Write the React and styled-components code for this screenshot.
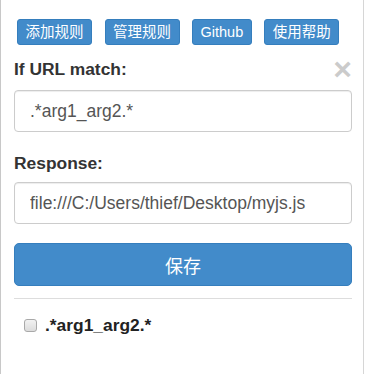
import React from 'react';
import styled, { createGlobalStyle } from 'styled-components';

const GlobalStyle = createGlobalStyle`
  html, body {
    margin: 0;
    padding: 0;
    background: #fff;
  }
  body {
    font-family: "Liberation Sans", "Noto Sans CJK SC", Arial, sans-serif;
    color: #333;
  }
`;

const Panel = styled.div`
  box-sizing: border-box;
  width: 364px;
  height: 374px;
  border-left: 1px solid #c8c8c8;
  border-right: 1px solid #d6d6d6;
  padding: 19px 11px 0 13px;
`;

const Toolbar = styled.div`
  display: flex;
  gap: 12.5px;
  margin-left: 3px;
`;

const ToolButton = styled.button`
  height: 26px;
  padding: 0 7.5px;
  border: 1px solid #357ebd;
  border-radius: 3px;
  background: #428bca;
  color: #fff;
  font-family: "Liberation Sans", "Noto Sans CJK SC", sans-serif;
  font-size: 14.5px;
  line-height: 24px;
  cursor: pointer;
`;

const LabelRow = styled.div`
  display: flex;
  justify-content: space-between;
  align-items: center;
  margin-top: ${p => p.$top}px;
  height: 20px;
`;

const Label = styled.label`
  font-size: 17.4px;
  font-weight: bold;
  color: #333;
`;

const Close = styled.span`
  font-size: 32px;
  font-weight: bold;
  color: #000;
  opacity: 0.2;
  line-height: 20px;
  margin-right: 0;
`;

const TextInput = styled.input`
  display: block;
  box-sizing: border-box;
  width: 100%;
  height: 42px;
  margin-top: ${p => p.$top}px;
  padding: 0 12px 0 15px;
  border: 1px solid #ccc;
  border-radius: 4px;
  box-shadow: inset 0 1px 1px rgba(0, 0, 0, 0.075);
  font-family: "Liberation Sans", sans-serif;
  font-size: 17.5px;
  color: #555;
  outline: none;
`;

const SaveButton = styled.button`
  display: block;
  box-sizing: border-box;
  width: 100%;
  height: 43px;
  margin-top: 19px;
  border: 1px solid #357ebd;
  border-radius: 5px;
  background: #428bca;
  color: #fff;
  font-family: "Noto Sans CJK SC", sans-serif;
  font-size: 18px;
  cursor: pointer;
`;

const Divider = styled.hr`
  margin: 12px 0 0;
  border: 0;
  border-top: 1px solid #ddd;
`;

const RuleItem = styled.label`
  display: flex;
  align-items: center;
  gap: 8px;
  margin-top: 16px;
  padding-left: 10px;
  font-size: 17.4px;
  font-weight: bold;
  color: #222;
`;

const Check = styled.input`
  appearance: none;
  width: 13px;
  height: 13px;
  margin: 0;
  border: 1px solid #a9a9a9;
  border-radius: 3px;
  background: linear-gradient(#f2f2f2, #dcdcdc);
`;

export default function App() {
  return (
    <>
      <GlobalStyle />
      <Panel>
        <Toolbar>
          <ToolButton>添加规则</ToolButton>
          <ToolButton>管理规则</ToolButton>
          <ToolButton>Github</ToolButton>
          <ToolButton>使用帮助</ToolButton>
        </Toolbar>

        <LabelRow $top={14}>
          <Label>If URL match:</Label>
          <Close>×</Close>
        </LabelRow>
        <TextInput $top={11} defaultValue=".*arg1_arg2.*" />

        <LabelRow $top={21}>
          <Label>Response:</Label>
        </LabelRow>
        <TextInput $top={9} defaultValue="file:///C:/Users/thief/Desktop/myjs.js" />

        <SaveButton>保存</SaveButton>
        <Divider />

        <RuleItem>
          <Check type="checkbox" />
          .*arg1_arg2.*
        </RuleItem>
      </Panel>
    </>
  );
}
